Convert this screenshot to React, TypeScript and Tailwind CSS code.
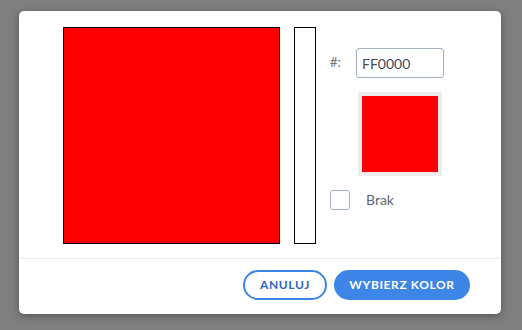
export default function App() {
  return (
    <div className="h-[330px] w-[522px] bg-[#808080] pt-[11px] pl-[19px] font-['Lato','Liberation_Sans',sans-serif]">
      <div className="w-[482px] rounded-[5px] bg-white shadow-[0_2px_8px_rgba(0,0,0,0.35)]">
        <div className="flex pl-[44px] pt-[16px]">
          <div className="h-[217px] w-[217px] border border-black bg-[#ff0000]" />
          <div className="ml-[14px] h-[217px] w-[22px] border border-black bg-white" />
          <div className="ml-[14px] flex flex-col pt-[21px]">
            <div className="flex items-center">
              <span className="w-[26px] text-[13px] text-[#6b7280]">#:</span>
              <input
                readOnly
                value="FF0000"
                className="h-[30px] w-[88px] rounded-[3px] border border-[#a3b0c8] px-[5px] text-[14px] text-[#454b55] outline-none"
              />
            </div>
            <div className="ml-[28px] mt-[14px] h-[84px] w-[84px] border-4 border-[#ececec] bg-[#ff0000]" />
            <div className="mt-[14px] flex items-center">
              <div className="h-[20px] w-[20px] rounded-[3px] border border-[#a3b0c8] bg-white" />
              <span className="ml-[16px] -mt-[2px] text-[14px] text-[#5f6675]">Brak</span>
            </div>
          </div>
        </div>
        <div className="mt-[14px] border-t border-[#ececec]" />
        <div className="flex justify-end gap-[7px] pt-[11px] pb-[14px] pr-[31px]">
          <button className="h-[30px] w-[84px] rounded-full border-2 border-[#3d85e6] bg-white text-[12px] font-bold tracking-[0.6px] text-[#2f66c4]">
            ANULUJ
          </button>
          <button className="h-[30px] w-[136px] rounded-full bg-[#3d85e6] text-[12px] font-bold tracking-[0.6px] text-white">
            WYBIERZ KOLOR
          </button>
        </div>
      </div>
    </div>
  );
}
